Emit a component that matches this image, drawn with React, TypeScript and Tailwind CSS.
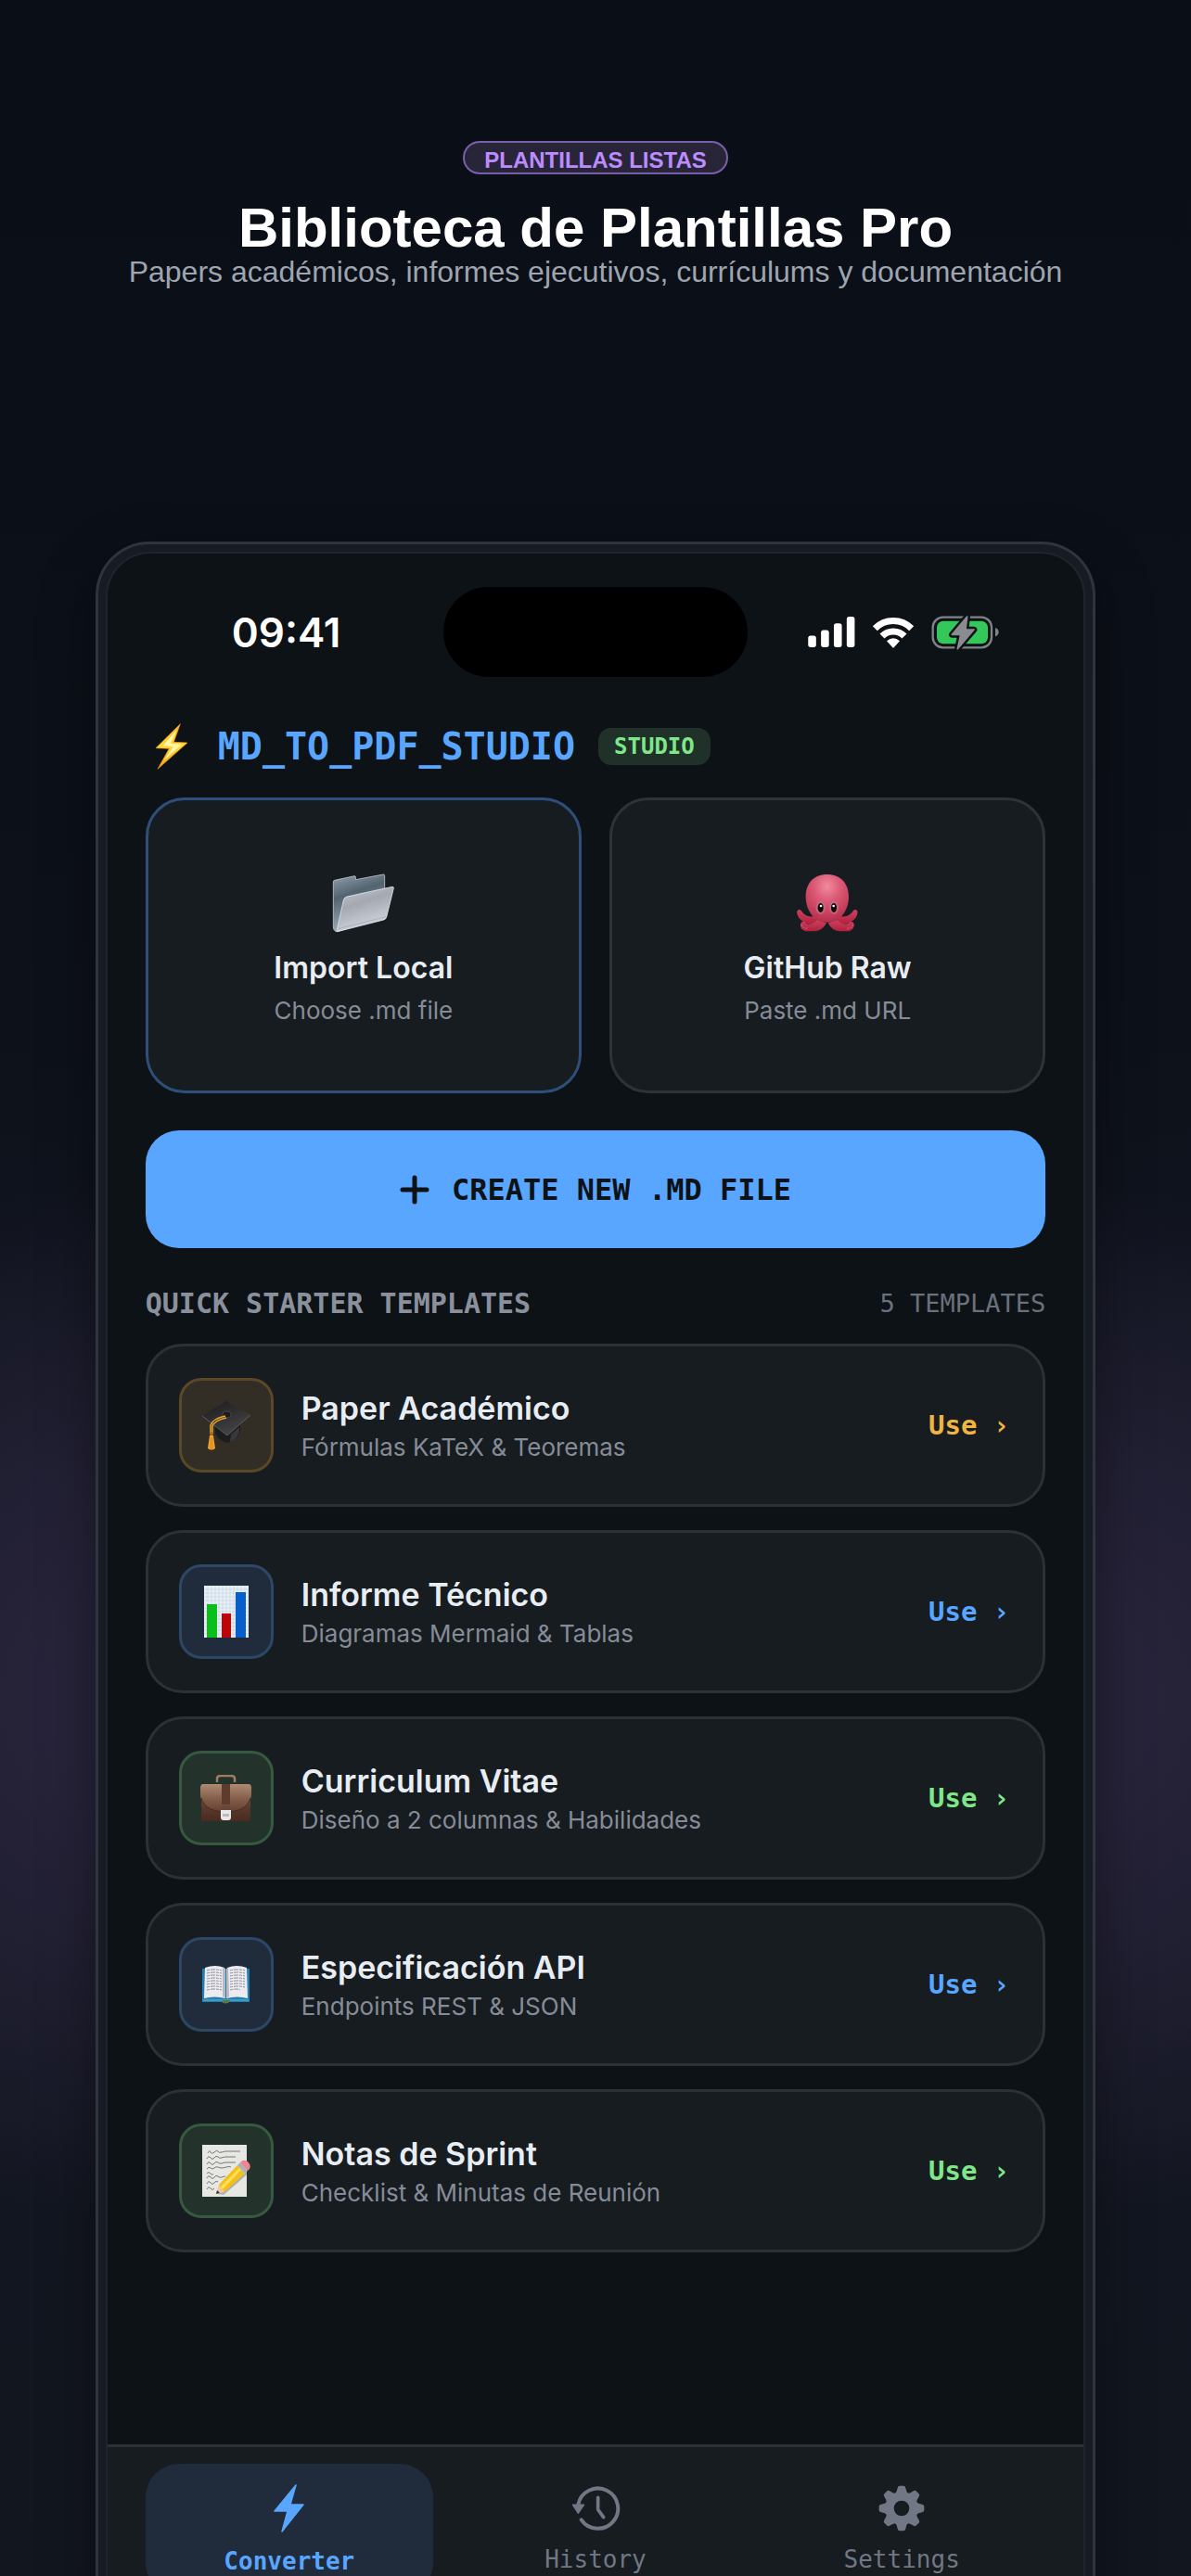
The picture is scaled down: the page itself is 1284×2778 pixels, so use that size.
import React from 'react';

const INTER = "font-['Inter',sans-serif]";
const MONO = "font-['DejaVu_Sans_Mono',monospace]";

function SignalIcon() {
  return (
    <svg viewBox="63 72 153 100" className="w-[51px] h-[33px]" fill="#fff" aria-hidden="true">
      <rect x="63" y="134" width="26" height="38" rx="8" />
      <rect x="105" y="116" width="26" height="56" rx="8" />
      <rect x="147" y="94" width="26" height="78" rx="8" />
      <rect x="189" y="72" width="26" height="100" rx="8" />
    </svg>
  );
}

function WifiIcon() {
  return (
    <svg viewBox="272 71 136 102" className="w-[46px] h-[34px]" aria-hidden="true">
      <path d="M281 109 A83 83 0 0 1 399 109" fill="none" stroke="#fff" strokeWidth="21" />
      <path d="M304 134 A50 50 0 0 1 376 134" fill="none" stroke="#fff" strokeWidth="21" />
      <path d="M319 150 Q340 132 361 150 L342 171 Q340 173 338 171 Z" fill="#fff" />
    </svg>
  );
}

function BatteryIcon() {
  const bolt = 'M578 72 L529 130 L557 130 L547 176 L600 114 L573 114 Z';
  return (
    <svg viewBox="462 66 219 114" className="w-[73px] h-[38px]" aria-hidden="true">
      <rect x="467" y="74" width="190" height="98" rx="33" fill="none" stroke="#818287" strokeWidth="7" />
      <rect x="480" y="86" width="165" height="74" rx="21" fill="#34c759" />
      <path d="M669 108 Q680 112 680 122 Q680 132 669 136 Z" fill="#818287" />
      <path d={bolt} fill="#0d1216" stroke="#0d1216" strokeWidth="20" strokeLinejoin="round" />
      <path d={bolt} fill="#8b8c91" stroke="#8b8c91" strokeWidth="5" strokeLinejoin="round" />
    </svg>
  );
}

function BoltEmoji() {
  return (
    <svg viewBox="50 26 108 150" className="w-[36px] h-[50px]" aria-hidden="true">
      <defs>
        <linearGradient id="boltFill" x1="0" y1="0" x2="0" y2="1">
          <stop offset="0" stopColor="#ffb52a" />
          <stop offset="0.5" stopColor="#ffd93b" />
          <stop offset="1" stopColor="#f99b12" />
        </linearGradient>
      </defs>
      <path d="M132 28 L53 106 L96 108 L59 174 L155 89 L111 87 Z" fill="url(#boltFill)" stroke="#f39a13" strokeWidth="2" />
      <path d="M121 46 L76 99 L110 101 L79 146 L137 94 L101 92 Z" fill="#fff6a8" />
    </svg>
  );
}

function FolderEmoji() {
  return (
    <svg viewBox="620 508 207 202" className="w-[69px] h-[68px]" aria-hidden="true">
      <defs>
        <linearGradient id="folderBack" x1="0" y1="0" x2="0.3" y2="1">
          <stop offset="0" stopColor="#93a2af" />
          <stop offset="0.4" stopColor="#52646f" />
          <stop offset="1" stopColor="#a5b1bc" />
        </linearGradient>
        <linearGradient id="folderFront" x1="0" y1="0" x2="0.4" y2="1">
          <stop offset="0" stopColor="#c5cad3" />
          <stop offset="0.45" stopColor="#a3a8b1" />
          <stop offset="1" stopColor="#d0d5de" />
        </linearGradient>
      </defs>
      <path d="M627 540 Q627 536 631 535 L696 521 Q699 521 699 525 V533 L789 516 Q793 516 793 520 V650 L640 701 Q634 702 630 696 Q627 692 627 686 Z" fill="url(#folderBack)" stroke="#bfc8d1" strokeWidth="2.5" />
      <path d="M660 600 Q662 590 671 588 L818 556 Q823 556 822 561 L799 654 Q797 661 790 663 L640 701 Q638 700 639 695 Z" fill="url(#folderFront)" stroke="#dfe5ec" strokeWidth="2.5" />
      <path d="M643 692 L797 653" stroke="#929aa6" strokeWidth="1.5" />
    </svg>
  );
}

function OctopusEmoji() {
  return (
    <svg viewBox="51 58 207 204" className="w-[69px] h-[68px]" aria-hidden="true">
      <defs>
        <radialGradient id="octoHead" cx="0.5" cy="0.25" r="0.75">
          <stop offset="0" stopColor="#f08b9d" />
          <stop offset="0.4" stopColor="#dc5b77" />
          <stop offset="1" stopColor="#b62f4c" />
        </radialGradient>
        <linearGradient id="octoLeg" x1="0" y1="0" x2="0" y2="1">
          <stop offset="0" stopColor="#c94361" />
          <stop offset="1" stopColor="#b3203d" />
        </linearGradient>
      </defs>
      <g fill="url(#octoLeg)">
        <path d="M57 183 Q64 177 71 188 Q84 208 112 202 L130 225 Q96 232 78 222 Q56 211 54 188 Z" />
        <path d="M248 183 Q241 177 234 188 Q221 208 193 202 L175 225 Q209 232 227 222 Q249 211 251 188 Z" />
        <path d="M67 224 Q76 213 85 226 Q104 232 120 214 L150 224 Q137 250 112 251 H82 Q61 244 67 224 Z" />
        <path d="M238 224 Q229 213 220 226 Q201 232 185 214 L155 224 Q168 250 193 251 H223 Q244 244 238 224 Z" />
      </g>
      <path d="M68 229 Q72 241 88 242 M237 229 Q233 241 217 242" fill="none" stroke="#e06c83" strokeWidth="3" strokeDasharray="5 5" />
      <path d="M152 67 C108 67 82 97 83 141 C84 187 113 222 152 222 C192 222 221 187 222 141 C223 97 196 67 152 67 Z" fill="url(#octoHead)" />
      <ellipse cx="131" cy="174" rx="15" ry="22" fill="#c9647d" />
      <ellipse cx="174" cy="174" rx="15" ry="22" fill="#c9647d" />
      <ellipse cx="131" cy="175" rx="9" ry="15" fill="#080808" />
      <ellipse cx="174" cy="175" rx="9" ry="15" fill="#080808" />
      <circle cx="132" cy="169" r="4" fill="#fff" />
      <circle cx="173" cy="169" r="4" fill="#fff" />
    </svg>
  );
}

function CapEmoji() {
  return (
    <svg viewBox="0 0 54 54" className="w-[54px] h-[54px]" aria-hidden="true">
      <defs>
        <linearGradient id="capTop" x1="0" y1="0" x2="0.6" y2="1">
          <stop offset="0" stopColor="#19191b" />
          <stop offset="1" stopColor="#454548" />
        </linearGradient>
      </defs>
      <path d="M15 26 V36 Q21 45 28 46 Q39 43 42 33 V24 Z" fill="#1c1c1e" />
      <path d="M32 37 L41 29 V34 Q38 43 31 45 Z" fill="#39393c" />
      <path d="M1 17 L27 1 L53 16 L28 38 Z" fill="url(#capTop)" />
      <path d="M1 17 L28 38 L53 16" fill="none" stroke="#5b5b5f" strokeWidth="1" />
      <ellipse cx="27.5" cy="15.5" rx="4.5" ry="3.5" fill="#1b1b1d" stroke="#4a4a4d" strokeWidth="1" />
      <path d="M26 17 Q12 20 10 27 V35 M27 19 Q14 22 12 28 V35" fill="none" stroke="#e9a52d" strokeWidth="1.5" />
      <circle cx="11" cy="36" r="2" fill="#a2742a" />
      <path d="M9 38 H13 L15 52 Q11 55 7 52 Z" fill="#f0a32e" />
      <path d="M10 40 V53 M12 40 V53" stroke="#d18419" strokeWidth="0.8" />
    </svg>
  );
}

function ChartEmoji() {
  return (
    <svg viewBox="0 0 48 56" className="w-[48px] h-[56px]" aria-hidden="true">
      <rect width="48" height="56" fill="#e9eff5" />
      <path d="M4 0V56M8 0V56M12 0V56M16 0V56M20 0V56M24 0V56M28 0V56M32 0V56M36 0V56M40 0V56M44 0V56M0 4H48M0 8H48M0 12H48M0 16H48M0 20H48M0 24H48M0 28H48M0 32H48M0 36H48M0 40H48M0 44H48M0 48H48M0 52H48" stroke="#c3d6e4" strokeWidth="0.7" />
      <rect x="3" y="20" width="11" height="36" fill="#0abf1c" />
      <rect x="19" y="30" width="10" height="26" fill="#c00508" />
      <rect x="34" y="7" width="11" height="49" fill="#075fc9" />
    </svg>
  );
}

function BriefcaseEmoji() {
  return (
    <svg viewBox="0 0 55 51" className="w-[55px] h-[51px]" aria-hidden="true">
      <defs>
        <linearGradient id="caseFlap" x1="0" y1="0" x2="0" y2="1">
          <stop offset="0" stopColor="#b08a72" />
          <stop offset="0.5" stopColor="#85604c" />
          <stop offset="1" stopColor="#65402f" />
        </linearGradient>
        <linearGradient id="caseBody" x1="0" y1="0" x2="0" y2="1">
          <stop offset="0" stopColor="#7a5341" />
          <stop offset="1" stopColor="#482a20" />
        </linearGradient>
      </defs>
      <path d="M18 8 V4 Q18 1 22 1 H33 Q37 1 37 4 V8" fill="none" stroke="#a27a60" strokeWidth="2.5" />
      <rect x="1" y="12" width="53" height="38" rx="2" fill="url(#caseBody)" />
      <path d="M3 10 H52 Q55 10 55 14 V22 C54 34 42 40 28 40 C13 40 1 34 0 22 V14 Q0 10 3 10 Z" fill="url(#caseFlap)" />
      <path d="M1 25 C4 36 15 40 28 40 C40 40 51 36 54 25" fill="none" stroke="#452a20" strokeWidth="1" />
      <rect x="23" y="10" width="9" height="22" fill="#5d3c2f" />
      <path d="M21 38 V35 Q27 30 34 35 V38 Z" fill="#6c4636" />
      <path d="M22 38 H33 V46 Q33 49 30 49 H25 Q22 49 22 46 Z" fill="#e8e8ea" />
      <path d="M24 42 H31 V45 H24 Z" fill="#b9b9be" />
    </svg>
  );
}

function BookEmoji() {
  return (
    <svg viewBox="0 0 51 42" className="w-[51px] h-[42px]" aria-hidden="true">
      <path d="M0 4 H51 V40 H29 Q25 43 21 40 H0 Z" fill="#2380b0" />
      <path d="M1 38 H50" stroke="#59b6dc" strokeWidth="1" />
      <path d="M21 38 H30 L28 41 H23 Z" fill="#607a35" />
      <path d="M3 3 Q14 -1 24 3 L25 36 Q13 33 2 36 Z" fill="#ececf0" />
      <path d="M48 3 Q37 -1 27 3 L26 36 Q38 33 49 36 Z" fill="#ececf0" />
      <path d="M22 3 L25 4 V36 L22 34 Z M28 3 L26 4 V36 L29 34 Z" fill="#b8b9c3" />
      <path d="M5 6q8-2 16 0M5 9q8-2 16 0M5 12q8-2 16 0M5 15q8-2 16 0M5 18q8-2 16 0M5 21q8-2 16 0M5 24q8-2 16 0M5 27q8-2 16 0M30 6q8-2 16 0M30 9q8-2 16 0M30 12q8-2 16 0M30 15q8-2 16 0M30 18q8-2 16 0M30 21q8-2 16 0M30 24q8-2 16 0M30 27q8-2 11 0" fill="none" stroke="#8b8b98" strokeWidth="1" strokeDasharray="3 1 5 1" />
    </svg>
  );
}

function NotesEmoji() {
  return (
    <svg viewBox="0 0 52 56" className="w-[52px] h-[56px]" aria-hidden="true">
      <rect width="48" height="56" fill="#e7e7e4" />
      <path d="M6 9q2-4 3-1t4 0 4-1 4 1 5-1 5 0 5 0 5 0M5 15q2-4 4-1t4 0 4-1 4 1 5-1 5 0 5 0M5 21q2-4 4-1t4 0 4-1 4 1 5-1 5 0 5 0M5 26q2-3 4-1t4 0 4-1 4 1 5-1 5 0M5 31q2-3 4 0t3 0M5 36q2-4 4-1t4 0 4-1 4 1 4-1M5 42q2-4 4-1t4 0 4-1M5 48q2-4 4-1t4 0" fill="none" stroke="#6a6a6a" strokeWidth="0.9" />
      <path d="M17 53 L23 54 L47 33 L51 27 Z" fill="#000" opacity="0.25" />
      <path d="M15 53 L18 43 L24 51 Z" fill="#efc99a" />
      <path d="M15 53 L16 49 L19 52 Z" fill="#37332f" />
      <path d="M18 43 L38 22 L46 31 L24 51 Z" fill="#f5bf1b" />
      <path d="M20 45 L40 25 L42 27 L22 48 Z" fill="#ffdf55" />
      <path d="M38 22 L41 19 L49 28 L46 31 Z" fill="#a9b4bd" />
      <path d="M41 19 Q44 15 49 18 Q53 22 51 26 L49 28 Z" fill="#ee8591" />
    </svg>
  );
}

function PlusIcon() {
  return (
    <svg viewBox="0 0 32 32" className="w-[32px] h-[32px]" stroke="#0d1216" strokeWidth="5" strokeLinecap="round" aria-hidden="true">
      <path d="M16 3 V29 M3 16 H29" />
    </svg>
  );
}

function BoltIcon() {
  return (
    <svg viewBox="-1 -1 35 54" className="w-[35px] h-[54px]" fill="#58a6ff" stroke="#58a6ff" strokeWidth="1.5" strokeLinejoin="round" aria-hidden="true">
      <path d="M24 1 L1 29 H15 L9 51 L32 22 H18 Z" />
    </svg>
  );
}

function HistoryIcon() {
  return (
    <svg viewBox="69 180 159 150" className="w-[53px] h-[50px]" fill="none" stroke="#717784" strokeLinecap="round" strokeLinejoin="round" aria-hidden="true">
      <path d="M91 243 A65 65 0 1 1 101 292" strokeWidth="12" />
      <path d="M74 244 H109 L91 270 Z" fill="#717784" strokeWidth="5" />
      <path d="M155 220 V259 L173 284" strokeWidth="11" />
    </svg>
  );
}

function GearIcon() {
  return (
    <svg viewBox="-75 -75 150 150" className="w-[50px] h-[50px]" fill="#717784" aria-hidden="true">
      <circle r="39" fill="none" stroke="#717784" strokeWidth="28" />
      {[0, 45, 90, 135, 180, 225, 270, 315].map((angle) => (
        <path key={angle} d="M-22 -46 Q-15 -53 -13 -66 Q-12 -73 -6 -73 H6 Q12 -73 13 -66 Q15 -53 22 -46 Z" transform={`rotate(${angle})`} />
      ))}
    </svg>
  );
}

const sources = [
  { title: 'Import Local', desc: 'Choose .md file', icon: FolderEmoji, border: 'border-[#2e4f7a]' },
  { title: 'GitHub Raw', desc: 'Paste .md URL', icon: OctopusEmoji, border: 'border-[#2e3338]' },
];

const amber = { tile: 'bg-[#322e25] border-[#5b4827]', text: 'text-[#f0b440]' };
const blue = { tile: 'bg-[#202c3b] border-[#2d4767]', text: 'text-[#58a6ff]' };
const green = { tile: 'bg-[#23332c] border-[#365940]', text: 'text-[#7ee787]' };

const templates = [
  { title: 'Paper Académico', desc: 'Fórmulas KaTeX & Teoremas', icon: CapEmoji, color: amber },
  { title: 'Informe Técnico', desc: 'Diagramas Mermaid & Tablas', icon: ChartEmoji, color: blue },
  { title: 'Curriculum Vitae', desc: 'Diseño a 2 columnas & Habilidades', icon: BriefcaseEmoji, color: green },
  { title: 'Especificación API', desc: 'Endpoints REST & JSON', icon: BookEmoji, color: blue },
  { title: 'Notas de Sprint', desc: 'Checklist & Minutas de Reunión', icon: NotesEmoji, color: green },
];

function Promo() {
  return (
    <header className="flex flex-col items-center text-center font-['Liberation_Sans',sans-serif]">
      <span className="h-9 px-[21px] pt-[3px] rounded-full border-2 border-[#7a5fab] bg-[#292539] text-[#bc8cff] text-[24px] leading-[32px] font-bold">
        PLANTILLAS LISTAS
      </span>
      <h1 className="mt-7 text-white text-[60px] leading-[60px] font-bold">Biblioteca de Plantillas Pro</h1>
      <p className="text-[#9ea5b0] text-[32px] leading-[34px]">
        Papers académicos, informes ejecutivos, currículums y documentación
      </p>
    </header>
  );
}

function StatusBar() {
  return (
    <div className="grid grid-cols-[1fr_328px_1fr] items-center pt-9">
      <span className={`${INTER} pl-[134px] text-white text-[44px] leading-[48px] font-semibold`}>09:41</span>
      <div className="h-[97px] rounded-full bg-black" />
      <div className="flex items-center justify-end gap-[18px] pr-[91px]">
        <SignalIcon />
        <WifiIcon />
        <BatteryIcon />
      </div>
    </div>
  );
}

function TabBar() {
  const idle = `${MONO} flex flex-col items-center pt-[23px] pb-6 text-[#717784] text-[26px] leading-[28px]`;
  return (
    <nav className="grid grid-cols-3 gap-5 px-[41px] pt-[18px] pb-16 border-t-3 border-[#2c3138] bg-[#171c20]">
      <button className={`${MONO} flex flex-col items-center rounded-[36px] bg-[#202c3b] pt-[21px] pb-6 text-[#58a6ff] text-[26px] leading-[28px] font-bold`}>
        <BoltIcon />
        <span className="mt-4">Converter</span>
      </button>
      <button className={idle}>
        <HistoryIcon />
        <span className="mt-4">History</span>
      </button>
      <button className={idle}>
        <GearIcon />
        <span className="mt-4">Settings</span>
      </button>
    </nav>
  );
}

export default function App() {
  return (
    <div className="h-screen overflow-hidden pt-[152px] px-[8%] bg-[radial-gradient(1300px_620px_at_50%_66%,#29253d_0%,#27233a_45%,transparent_100%),linear-gradient(180deg,#0a0e16_0%,#0d111a_40%,#131722_60%,#12161f_100%)]">
      <Promo />

      <div className="mt-[274px] p-2 rounded-t-[58px] border-3 border-b-0 border-[#30343d] bg-[#161b24] shadow-[0_20px_60px_rgba(0,0,0,0.4)]">
        <div className="rounded-t-[48px] border-2 border-b-0 border-[#20242c] bg-[#0d1216] overflow-hidden">
          <StatusBar />

          <main className="px-[41px] pt-[55px] pb-[207px]">
            <div className="flex items-center h-10 pl-[10px]">
              <BoltEmoji />
              <h2 className={`${MONO} ml-8 text-[#58a6ff] text-[40px] leading-[40px] font-bold`}>MD_TO_PDF_STUDIO</h2>
              <span className={`${MONO} ml-[25px] px-[17px] h-10 rounded-[14px] bg-[#1f3129] text-[#7ee787] text-[24px] leading-[40px] font-bold`}>STUDIO</span>
            </div>

            <div className="grid grid-cols-2 gap-[30px] mt-[35px]">
              {sources.map((source) => (
                <button key={source.title} className={`${INTER} ${source.border} flex flex-col items-center border-3 rounded-[42px] bg-[#171c20] pt-[77px] pb-[68px]`}>
                  <source.icon />
                  <span className="mt-4 text-[#e8edf4] text-[32px] leading-[40px] font-semibold">{source.title}</span>
                  <span className="mt-2 text-[#868c97] text-[26px] leading-[36px]">{source.desc}</span>
                </button>
              ))}
            </div>

            <button className={`${MONO} mt-10 w-full h-[127px] flex items-center justify-center gap-6 rounded-[36px] bg-[#58a6ff] text-[#0d1216] text-[32px] font-bold`}>
              <PlusIcon />
              CREATE NEW .MD FILE
            </button>

            <div className={`${MONO} mt-10 flex items-center justify-between leading-[40px]`}>
              <h3 className="text-[#8b919c] text-[30px] font-bold">QUICK STARTER TEMPLATES</h3>
              <span className="text-[#6a707c] text-[27px]">5 TEMPLATES</span>
            </div>

            <div className="mt-[23px] flex flex-col gap-[25px]">
              {templates.map((item) => (
                <div key={item.title} className="h-[176px] flex items-center border-3 border-[#2c3138] rounded-[40px] bg-[#171c20] pl-[33px] pr-9">
                  <div className={`${item.color.tile} w-[102px] h-[102px] shrink-0 flex items-center justify-center rounded-3xl border-3`}>
                    <item.icon />
                  </div>
                  <div className={`${INTER} ml-[30px] pt-1 flex-1`}>
                    <h4 className="text-[#e8edf4] text-[34px] leading-[44px] font-semibold">{item.title}</h4>
                    <p className="text-[#868c97] text-[26px] leading-[40px]">{item.desc}</p>
                  </div>
                  <button className={`${MONO} ${item.color.text} text-[29px] leading-[40px] font-bold`}>Use ›</button>
                </div>
              ))}
            </div>
          </main>

          <TabBar />
        </div>
      </div>
    </div>
  );
}
